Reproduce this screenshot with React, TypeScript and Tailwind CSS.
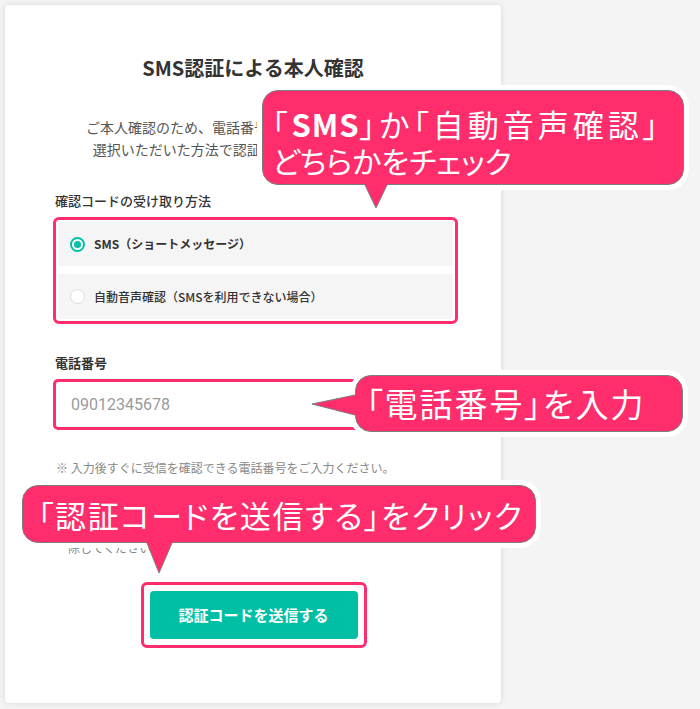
import React from "react";

const jp = { fontFamily: '"Noto Sans CJK JP", "Noto Sans", sans-serif' };
const palt = { fontFeatureSettings: '"palt"' };

function Bubble({ className, children }: { className: string; children: React.ReactNode }) {
  return (
    <div
      className={`absolute z-10 rounded-[16px] border border-[#7d7d7d] bg-[#ff2d6b] text-white shadow-[0_0_0_5px_#ffffff] ${className}`}
      style={jp}
    >
      {children}
    </div>
  );
}

export default function App() {
  return (
    <div className="relative min-h-[709px] w-[700px] overflow-hidden bg-[#f4f4f4] p-[5px]" style={jp}>
      {/* Card */}
      <div className="flex h-[698px] w-[496px] flex-col rounded-[4px] bg-white pt-[49px] shadow-[0_0_6px_rgba(0,0,0,0.12)]">
        <h1 className="text-center text-[20px] font-bold leading-[28px] text-[#333]">SMS認証による本人確認</h1>
        <p className="mt-[34px] text-center text-[14px] leading-[22px] text-[#555]">
          ご本人確認のため、電話番号による認証を行います。
          <br />
          選択いただいた方法で認証コードをお送りします。
        </p>

        <div className="ml-[48px] mt-[31px] flex w-[405px] flex-col">
          <div className="pl-[2px] text-[13px] font-medium leading-[20px] text-[#333]">確認コードの受け取り方法</div>
          <div className="mt-[6px] flex flex-col gap-[8px] rounded-[6px] border-[3px] border-[#ff2d6b] p-[2px]">
            <div className="flex h-[44px] items-center gap-[9px] bg-[#f5f5f5] px-[12px]">
              <span className="flex h-[15px] w-[15px] items-center justify-center rounded-full border-2 border-[#00bfa5] bg-white">
                <span className="h-[7px] w-[7px] rounded-full bg-[#00bfa5]" />
              </span>
              <span className="text-[12px] font-bold text-[#333]">SMS（ショートメッセージ）</span>
            </div>
            <div className="flex h-[45px] items-center gap-[9px] bg-[#f5f5f5] px-[12px]">
              <span className="h-[15px] w-[15px] rounded-full border border-[#dcdcdc] bg-white" />
              <span className="text-[12px] font-medium text-[#333]">自動音声確認（SMSを利用できない場合）</span>
            </div>
          </div>

          <div className="mt-[29px] pl-[2px] text-[13px] font-bold leading-[20px] text-[#333]">電話番号</div>
          <div className="mt-[6px] flex h-[51px] items-center rounded-[5px] border-[3px] border-[#ff2d6b] bg-white pl-[15px]">
            <span className="text-[16px] text-[#9a9a9a]" style={{ fontFamily: '"Roboto", "Liberation Sans", sans-serif' }}>
              09012345678
            </span>
          </div>

          <p className="mt-[29px] pl-[3px] text-[12px] leading-[18px] text-[#888]">
            ※ 入力後すぐに受信を確認できる電話番号をご入力ください。
          </p>
          <p className="mt-[21px] pl-[3px] text-[12px] leading-[20px] text-[#888]">
            ※ SMSが届かない場合は、受信拒否設定がされていないかご確認の上、
            <br />
            <span className="pl-[12px]">設定されている場合は、SMSを受信できるよう設定を解</span>
            <br />
            <span className="pl-[12px]">除してください。</span>
          </p>

          <div className="mt-[24px] flex justify-center pr-[4px]">
            <div className="rounded-[6px] border-[3px] border-[#ff2d6b] p-[6px]">
              <button className="flex h-[48px] w-[208px] items-center justify-center rounded-[4px] bg-[#00bfa5] text-[15px] font-bold text-white">
                認証コードを送信する
              </button>
            </div>
          </div>
        </div>
      </div>

      {/* Bubble 1 */}
      <Bubble className="left-[262px] top-[90px] h-[95px] w-[422px] pl-[9px] pt-[14px]">
        <div className="text-[31px] leading-[37px] tracking-[4px] whitespace-nowrap" style={palt}>
          「<span className="font-bold tracking-[1px]">SMS</span>」か「自動音声確認」
        </div>
        <div className="text-[30px] leading-[37px] whitespace-nowrap" style={palt}>
          どちらかをチェック
        </div>
      </Bubble>
      <svg className="absolute left-[362px] top-[182px] z-20" width="28" height="28" viewBox="0 0 28 28">
        <polygon points="3,0 25,0 25,3 14,26 3,3" fill="#ff2d6b" />
        <polyline points="3,3 14,26 25,3" fill="none" stroke="#7d7d7d" strokeWidth="1" />
      </svg>

      {/* Bubble 2 */}
      <Bubble className="left-[355px] top-[375px] flex h-[57px] w-[328px] items-center pl-[10px]">
        <span className="text-[33px] leading-none tracking-[2px] whitespace-nowrap" style={palt}>
          「電話番号」を入力
        </span>
      </Bubble>
      <svg className="absolute left-[310px] top-[392px] z-20" width="48" height="26" viewBox="0 0 48 26">
        <polygon points="48,3 45,3 2,12 45,23 48,23" fill="#ff2d6b" />
        <polyline points="45,3 2,12 45,23" fill="none" stroke="#7d7d7d" strokeWidth="1" />
      </svg>

      {/* Bubble 3 */}
      <Bubble className="left-[22px] top-[485px] flex h-[58px] w-[514px] items-center pl-[15px]">
        <span className="text-[31px] leading-none tracking-[1.6px] whitespace-nowrap" style={palt}>
          「認証コードを送信する」をクリック
        </span>
      </Bubble>
      <svg className="absolute left-[144px] top-[540px] z-20" width="31" height="35" viewBox="0 0 31 35">
        <polygon points="3,0 28,0 28,3 15,33 3,3" fill="#ff2d6b" />
        <polyline points="3,3 15,33 28,3" fill="none" stroke="#7d7d7d" strokeWidth="1" />
      </svg>
    </div>
  );
}
